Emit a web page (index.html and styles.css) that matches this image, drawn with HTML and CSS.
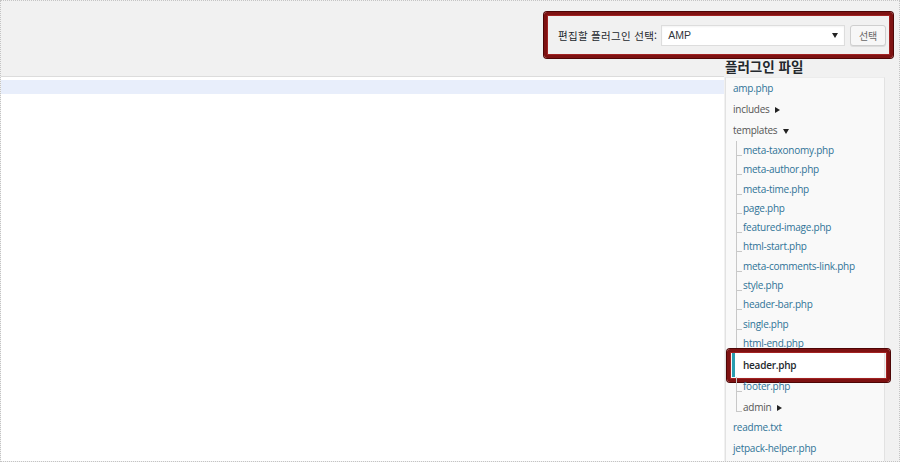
FILE: index.html
```html
<!DOCTYPE html>
<html lang="ko">
<head>
<meta charset="utf-8">
<title>플러그인 편집기</title>
<link rel="stylesheet" href="styles.css">
</head>
<body>
<div class="wrap">
  <div class="top">
    <form class="picker">
      <label class="picker-label">편집할 플러그인 선택:</label>
      <div class="select"><span>AMP</span><svg class="caret" width="6" height="5" viewBox="0 0 6 5"><path d="M0 0H6L3 5Z" fill="#222"/></svg></div>
      <button type="button" class="btn">선택</button>
    </form>
  </div>
  <div class="main">
    <div class="editor">
      <div class="line active"></div>
    </div>
    <div class="sidebar">
      <h2 class="side-title">플러그인 파일</h2>
      <ul class="files">
        <li class="row file">amp.php</li>
        <li class="row folder">includes <svg class="tri" width="5" height="6" viewBox="0 0 5 6"><path d="M0 0L5 3L0 6Z" fill="#222"/></svg></li>
        <li class="row folder">templates <svg class="tri" width="6" height="5" viewBox="0 0 6 5"><path d="M0 0H6L3 5Z" fill="#222"/></svg>
          <ul class="sub">
            <li class="srow file">meta-taxonomy.php</li>
            <li class="srow file">meta-author.php</li>
            <li class="srow file">meta-time.php</li>
            <li class="srow file">page.php</li>
            <li class="srow file">featured-image.php</li>
            <li class="srow file">html-start.php</li>
            <li class="srow file">meta-comments-link.php</li>
            <li class="srow file">style.php</li>
            <li class="srow file">header-bar.php</li>
            <li class="srow file">single.php</li>
            <li class="srow file">html-end.php</li>
            <li class="srow current">header.php</li>
            <li class="srow file">footer.php</li>
            <li class="srow folder last">admin <svg class="tri" width="5" height="6" viewBox="0 0 5 6"><path d="M0 0L5 3L0 6Z" fill="#222"/></svg></li>
          </ul>
        </li>
        <li class="row file">readme.txt</li>
        <li class="row file">jetpack-helper.php</li>
      </ul>
    </div>
  </div>
</div>
</body>
</html>
```

FILE: styles.css
```css
* { box-sizing: border-box; }
html, body { margin: 0; padding: 0; }
body {
  width: 900px;
  height: 462px;
  overflow: hidden;
  font-family: "Open Sans", "Noto Sans CJK KR", sans-serif;
}
.wrap {
  width: 900px;
  height: 462px;
  border: 1px dotted #c4c4c4;
  background: #f1f1f1;
  display: flex;
  flex-direction: column;
  overflow: hidden;
}
.top {
  display: flex;
  justify-content: flex-end;
  padding: 11px 6px 0 0;
}
.picker {
  margin: 0;
  width: 349px;
  height: 46px;
  border: 3px solid #7e1212;
  border-radius: 3px;
  box-shadow: 0 0 0 1px #4e0606, inset 0 0 0 1px #a22222;
  display: flex;
  align-items: center;
  justify-content: flex-end;
  padding: 0 4px 0 11px;
}
.picker-label {
  font-family: "Noto Sans CJK KR", sans-serif;
  font-size: 10.5px;
  letter-spacing: 0.3px;
  color: #23282d;
  white-space: nowrap;
  margin-right: 4px;
}
.select {
  width: 185px;
  height: 21px;
  background: #fff;
  border: 1px solid #ddd;
  box-shadow: inset 0 1px 2px rgba(0,0,0,0.05);
  display: flex;
  align-items: center;
  justify-content: space-between;
  padding: 0 6px 0 6px;
  font-size: 10.5px;
  color: #32373c;
  font-family: "Liberation Sans", sans-serif;
}
.caret { margin-top: 1px; }
.btn {
  margin-left: 5px;
  width: 36px;
  height: 21px;
  padding: 0;
  background: #f7f7f7;
  border: 1px solid #cfcfcf;
  border-radius: 3px;
  box-shadow: 0 1px 0 #ddd;
  font-family: "Noto Sans CJK KR", sans-serif;
  font-size: 10px;
  color: #666;
}
.main {
  flex: 1;
  display: flex;
  gap: 1px;
  min-height: 0;
}
.editor {
  flex: 1;
  margin-top: 18px;
  background: #fff;
  border-top: 1px solid #dcdcdc;
  padding-top: 3px;
}
.line { height: 14px; }
.line.active { background: #e8eefb; }
.sidebar {
  width: 160px;
  margin-right: 14px;
  display: flex;
  flex-direction: column;
}
.side-title {
  margin: 0;
  height: 19px;
  line-height: 17px;
  font-family: "Noto Sans CJK KR", sans-serif;
  font-size: 13.5px;
  font-weight: 700;
  color: #23282d;
  white-space: nowrap;
}
.files {
  flex: 1;
  list-style: none;
  margin: 0;
  padding: 0 0 0 7px;
  background: #f9f9f9;
  border-left: 1px solid #e2e2e2;
  border-right: 1px solid #e2e2e2;
  border-top: 1px solid #ececec;
  font-size: 10px;
  font-family: "Open Sans", sans-serif;
  letter-spacing: -0.25px;
}
.row { line-height: 21px; }
.file { color: #2f7397; }
.folder { color: #555; }
.tri { margin-left: 3px; vertical-align: 0; }
.sub {
  list-style: none;
  margin: 0;
  padding: 0 0 0 10px;
}
.srow {
  position: relative;
  line-height: 19.3px;
}
.srow::before {
  content: "";
  position: absolute;
  left: -7px;
  top: 0;
  bottom: 0;
  border-left: 1px solid #c8c8c8;
}
.srow::after {
  content: "";
  position: absolute;
  left: -7px;
  top: 14px;
  width: 6px;
  border-top: 1px solid #c8c8c8;
}
.srow.last::before { bottom: auto; height: 15px; }
.srow.last { line-height: 20px; }
.srow.current {
  margin-left: -11px;
  padding-left: 8px;
  line-height: 24px;
  background: #fff;
  border-left: 3px solid #2a9db0;
  color: #23282d;
  font-weight: 600;
}
.srow.current::before {
  left: -8px;
  top: -4px;
  bottom: -5px;
  right: -6px;
  border: 3px solid #7e1212;
  border-radius: 3px;
  box-shadow: 0 0 0 1px #4e0606, inset 0 0 0 1px #a22222;
}
.srow.current::after { display: none; }
```
